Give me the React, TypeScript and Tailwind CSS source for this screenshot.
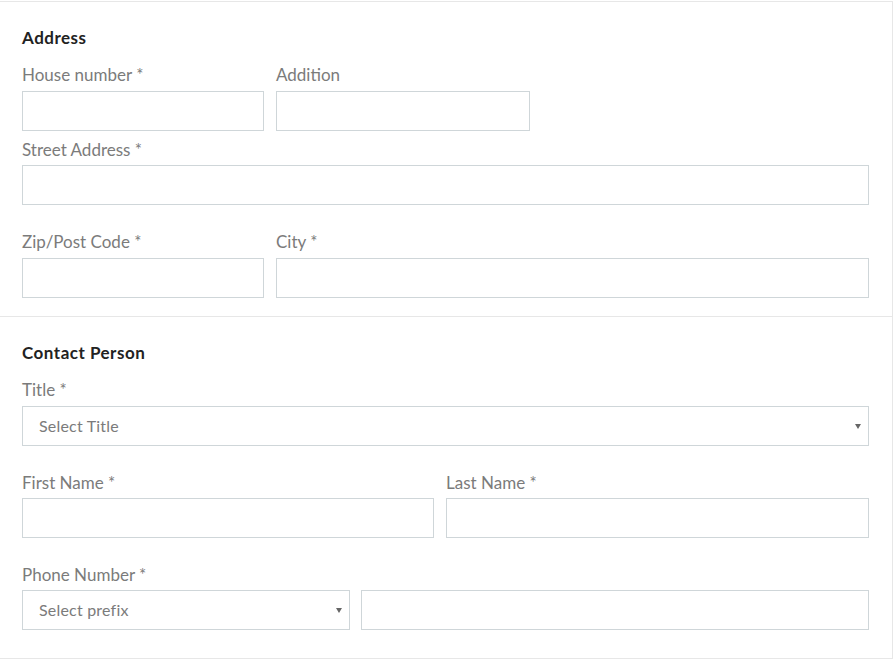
import type { ReactNode } from 'react'

function Label({ children, className = '' }: { children: ReactNode; className?: string }) {
  return (
    <label className={`block h-5 text-[17px] leading-5 text-[#7b7b7b] ${className}`}>
      {children}
    </label>
  )
}

function Input({ className = '' }: { className?: string }) {
  return (
    <input
      type="text"
      className={`block h-10 border border-[#cfd6d9] bg-white px-4 text-[16px] text-[#555] outline-none ${className}`}
    />
  )
}

function Select({ placeholder, className = '' }: { placeholder: string; className?: string }) {
  return (
    <div
      className={`flex h-10 items-center justify-between border border-[#cfd6d9] bg-white pl-4 pr-[7px] text-[16px] tracking-[0.2px] text-[#7b7b7b] ${className}`}
    >
      <span>{placeholder}</span>
      <span className="h-0 w-0 border-x-[3px] border-t-[5px] border-x-transparent border-t-[#666]" />
    </div>
  )
}

function Field({
  label,
  width,
  labelGap = 'mb-[6px]',
}: {
  label: string
  width: string
  labelGap?: string
}) {
  return (
    <div className={width}>
      <Label className={labelGap}>{label}</Label>
      <Input className="w-full" />
    </div>
  )
}

export default function App() {
  return (
    <div className="h-[659px] w-[893px] bg-white pt-px font-['Lato',sans-serif]">
      <div className="border-t border-r border-b border-[#e7e7e7]">
        <section className="border-b border-[#e7e7e7] px-[22px] pt-[26px] pb-[18px]">
          <h2 className="h-5 text-[17px] font-bold leading-5 tracking-[0.5px] text-[#222]">Address</h2>

          <div className="mt-[17px] flex gap-3">
            <Field label="House number *" width="w-[242px]" />
            <Field label="Addition" width="w-[254px]" />
          </div>

          <div className="mt-[9px] w-[847px]">
            <Label className="mb-[5px]">Street Address *</Label>
            <Input className="w-full" />
          </div>

          <div className="mt-[27px] flex gap-3">
            <Field label="Zip/Post Code *" width="w-[242px]" />
            <Field label="City *" width="w-[593px]" />
          </div>
        </section>

        <section className="px-[22px] pt-[26px] pb-[28px]">
          <h2 className="h-5 text-[17px] font-bold leading-5 tracking-[0.5px] text-[#222]">Contact Person</h2>

          <div className="mt-[17px] w-[847px]">
            <Label className="mb-[6px]">Title *</Label>
            <Select placeholder="Select Title" className="w-full" />
          </div>

          <div className="mt-[27px] flex gap-3">
            <Field label="First Name *" width="w-[412px]" labelGap="mb-[5px]" />
            <Field label="Last Name *" width="w-[423px]" labelGap="mb-[5px]" />
          </div>

          <div className="mt-[27px]">
            <Label className="mb-[5px]">Phone Number *</Label>
            <div className="flex gap-[11px]">
              <Select placeholder="Select prefix" className="w-[328px]" />
              <Input className="w-[508px]" />
            </div>
          </div>
        </section>
      </div>
    </div>
  )
}
